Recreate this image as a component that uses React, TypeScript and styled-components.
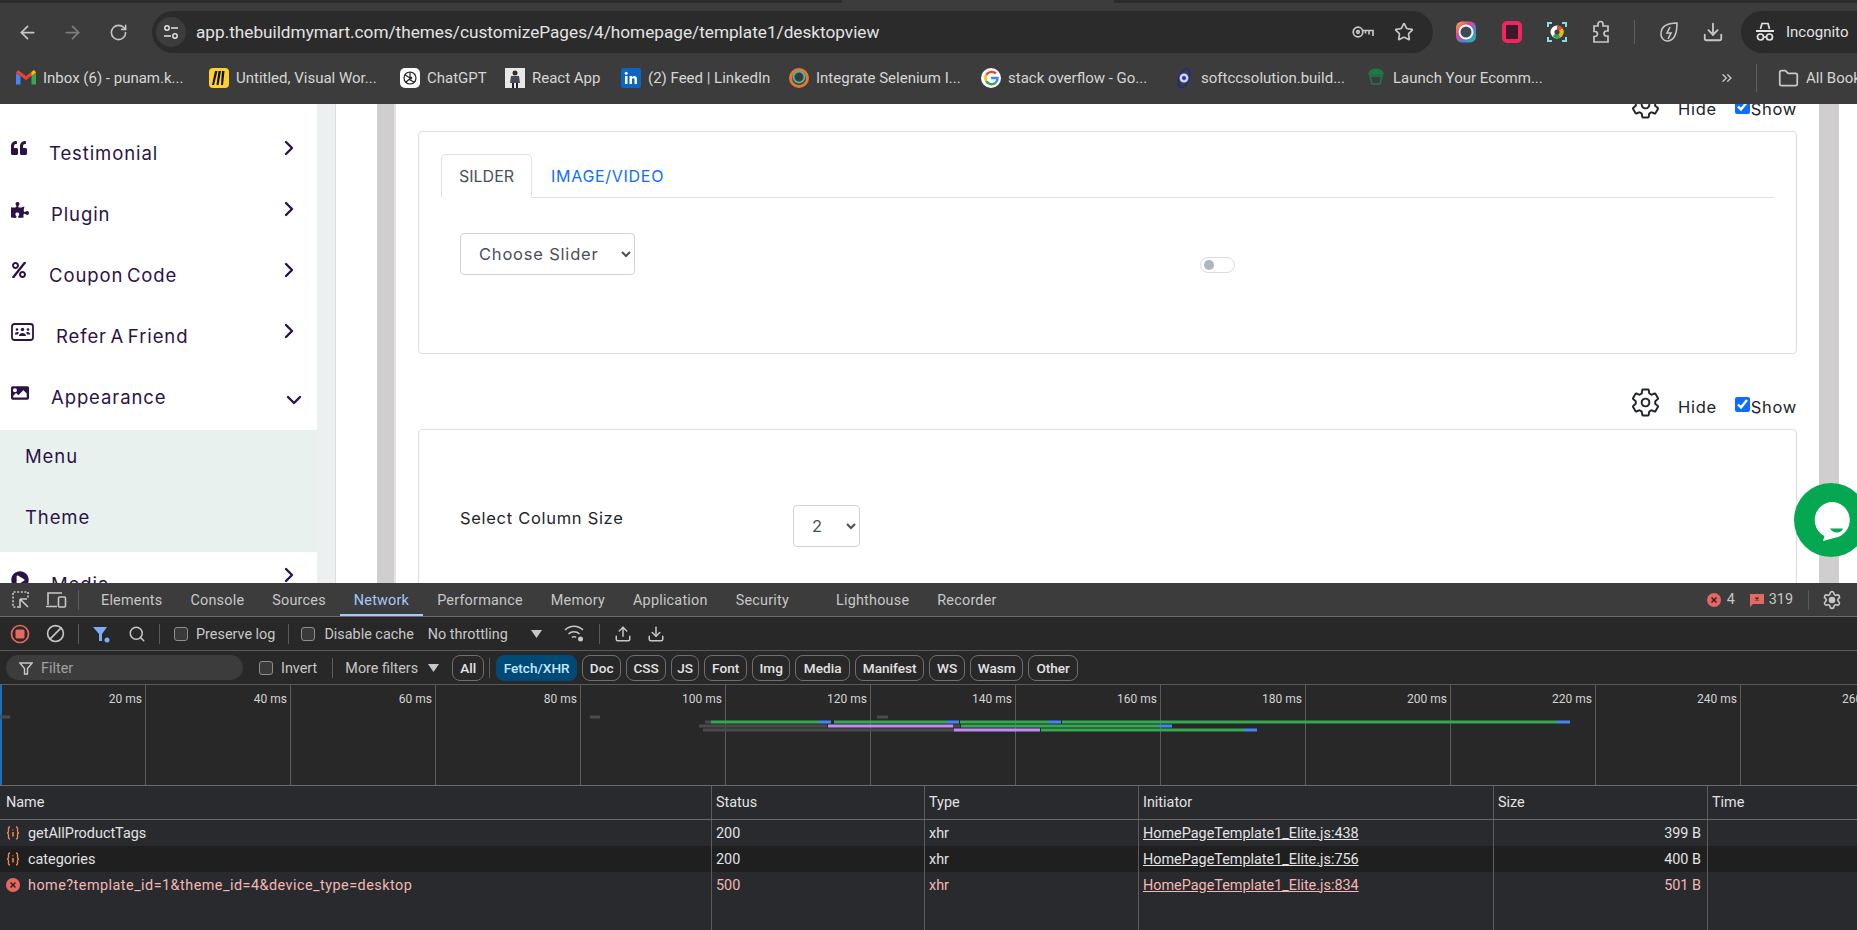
import React from "react";
import styled, { createGlobalStyle } from "styled-components";
import {
  ArrowLeft,
  ArrowRight,
  RotateCw,
  Star,
  Download,
  Upload,
  Folder,
  ChevronRight,
  ChevronDown,
  ChevronsRight,
  Settings,
  Search,
  Ban,
} from "lucide-react";
import { FaQuoteLeft, FaPuzzlePiece, FaPercent, FaImage, FaPlayCircle } from "react-icons/fa";
import { IoSettingsOutline } from "react-icons/io5";

const UI = `Roboto, "Liberation Sans", sans-serif`;
const PAGE = `Inter, "Liberation Sans", sans-serif`;

const GlobalStyle = createGlobalStyle`
  html, body { margin: 0; padding: 0; height: 100%; overflow: hidden; background: #282828; }
  * { box-sizing: border-box; }
`;

const Shell = styled.div`
  width: 1857px;
  height: 930px;
  display: flex;
  flex-direction: column;
  overflow: hidden;
`;

/* browser chrome */
const TopStrip = styled.div`
  height: 3px;
  display: flex;
  justify-content: space-between;
  background: #3c3c3c;
`;
const TopTab = styled.div<{ $w: number }>`
  width: ${(p) => p.$w}px;
  background: #2b2b2b;
`;
const Toolbar = styled.div`
  height: 50px;
  background: #3c3c3c;
  display: flex;
  align-items: flex-start;
  padding-top: 8px;
`;
const NavSlot = styled.div<{ $w: number; $ml?: number }>`
  width: ${(p) => p.$w}px;
  margin-left: ${(p) => p.$ml || 0}px;
  height: 42px;
  display: flex;
  align-items: center;
  justify-content: center;
  color: ${(p) => p.color || "#c7c7c7"};
  flex: none;
`;
const AddressBar = styled.div`
  width: 1281px;
  height: 42px;
  margin-left: 6px;
  padding-right: 9px;
  border-radius: 21px;
  background: #2b2b2b;
  display: flex;
  align-items: center;
  flex: none;
`;
const TuneButton = styled.div`
  width: 30px;
  height: 30px;
  margin-left: 4px;
  border-radius: 50%;
  background: #3c3c3c;
  display: flex;
  align-items: center;
  justify-content: center;
`;
const Url = styled.div`
  margin-left: 10px;
  flex: 1;
  font: 400 17.2px ${UI};
  color: #e3e3e3;
  white-space: nowrap;
`;
const UrlAction = styled.div`
  width: 41px;
  display: flex;
  justify-content: center;
  color: #c7c7c7;
`;
const ToolDivider = styled.div`
  width: 1px;
  height: 24px;
  background: #5f5f5f;
  margin: 9px 23px 0 22px;
`;
const IncognitoPill = styled.div`
  margin-left: 17px;
  width: 116px;
  height: 42px;
  border-radius: 21px 0 0 21px;
  background: #2b2b2b;
  display: flex;
  align-items: center;
  padding-left: 14px;
  gap: 11px;
  font: 400 15px ${UI};
  color: #e3e3e3;
`;
const BookmarkBar = styled.div`
  height: 51px;
  background: #3c3c3c;
  display: flex;
  align-items: center;
  padding: 0 0 1px 16px;
`;
const Bookmark = styled.div<{ $w: number }>`
  width: ${(p) => p.$w}px;
  flex: none;
  display: flex;
  align-items: center;
  gap: 7px;
  font: 400 15px ${UI};
  color: #d6d6d6;
  white-space: nowrap;
  overflow: hidden;

  svg {
    flex: none;
  }
`;
const BarDivider = styled.div`
  width: 1px;
  height: 28px;
  background: #5f5f5f;
  margin: 0 21px;
`;

/* page */
const Viewport = styled.div`
  height: 479px;
  display: flex;
  overflow: hidden;
  position: relative;
  background: #fff;
`;
const Sidebar = styled.nav`
  width: 317px;
  flex: none;
  padding-top: 21px;
  font: 400 18.5px ${PAGE};
  letter-spacing: 0.9px;
  word-spacing: -2.5px;
  color: #2b1348;
`;
const MenuItem = styled.div<{ $last?: boolean }>`
  height: 61px;
  padding: ${(p) => (p.$last ? "20px" : "16px")} 0 0 11px;
  position: relative;
  display: flex;
  align-items: flex-start;
  line-height: 24px;
`;
const MenuIcon = styled.span`
  display: flex;
  margin: -1px 22px 0 0;
`;
const Caret = styled.span<{ $open?: boolean }>`
  position: absolute;
  right: ${(p) => (p.$open ? 11 : 16)}px;
  top: ${(p) => (p.$open ? 19 : 11)}px;
  display: flex;

  svg {
    stroke-width: 2.4;
  }
`;
const SubMenu = styled.div`
  background: #e9f1ee;
`;
const SubItem = styled.div`
  height: 61px;
  padding: 0 0 9px 25px;
  display: flex;
  align-items: center;
`;
const Gutter = styled.div`
  width: 19px;
  flex: none;
  background: #ecf0f1;
  border-right: 1px solid #dcdfe0;
`;
const Panel = styled.main`
  flex: 1;
  display: flex;
  padding: 0 18px 0 41px;
  min-width: 0;
`;
const Frame = styled.div`
  flex: 1;
  min-width: 0;
  overflow: hidden;
  border-left: 17px solid #d0cece;
  border-right: 20px solid #d0cece;
  box-shadow: inset 2px 0 0 #e2e2e2;
  padding: 0 22px 0 24px;
  font: 400 16.5px ${PAGE};
  letter-spacing: 0.7px;
  color: #212529;
`;
const ScrolledContent = styled.div`
  margin-top: -23px;
`;
const SectionHead = styled.div`
  height: 50px;
  display: flex;
  justify-content: flex-end;
  align-items: flex-start;
  padding-top: 8px;
`;
const HeadLabel = styled.span<{ $gap: number }>`
  margin: 8px 0 0 ${(p) => p.$gap}px;
  line-height: 24px;
`;
const ShowBox = styled.input`
  width: 15px;
  height: 15px;
  margin: 10px 1px 0 18px;
  accent-color: #0d6efd;
`;
const Card = styled.section<{ $h: number }>`
  border: 1px solid #dcdfe2;
  border-radius: 4px;
  background: #fff;
  margin-bottom: 25px;
  height: ${(p) => p.$h}px;
`;
const TabStrip = styled.div`
  margin: 22px 22px 0;
  height: 44px;
  display: flex;
  border-bottom: 1px solid #dee2e6;
`;
const TabLink = styled.div<{ $active?: boolean }>`
  height: 44px;
  padding: 0 ${(p) => (p.$active ? 17 : 18)}px;
  display: flex;
  align-items: center;
  font: 400 16px ${PAGE};
  letter-spacing: ${(p) => (p.$active ? 0 : 0.7)}px;
  color: ${(p) => (p.$active ? "#495057" : "#0d6efd")};
  border: 1px solid ${(p) => (p.$active ? "#dee2e6" : "transparent")};
  border-bottom-color: ${(p) => (p.$active ? "#fff" : "transparent")};
  border-radius: 5px 5px 0 0;
`;
const SliderRow = styled.div`
  display: flex;
  align-items: flex-start;
  padding: 35px 0 0 41px;
`;
const FormSelect = styled.select<{ $w: number }>`
  width: ${(p) => p.$w}px;
  height: 42px;
  padding: 0 0 0 14px;
  background: #fff;
  border: 1px solid #ced4da;
  border-radius: 4px;
  font: 400 16.5px ${PAGE};
  letter-spacing: 0.8px;
  color: #495057;
`;
const Toggle = styled.span`
  margin: 24px 0 0 565px;
  width: 35px;
  height: 16px;
  border: 1px solid #dcdcdc;
  border-radius: 8px;
  padding: 2px 3px;
  display: block;
`;
const ToggleDot = styled.span`
  display: block;
  width: 10px;
  height: 10px;
  border-radius: 50%;
  background: #adb5bd;
`;
const ColumnRow = styled.div`
  display: flex;
  padding: 75px 0 0 41px;
`;
const ColumnLabel = styled.label`
  width: 333px;
  flex: none;
  line-height: 26px;
`;
const ChatBubble = styled.div`
  position: absolute;
  left: 1794px;
  top: 379px;
`;

/* devtools */
const Devtools = styled.div`
  flex: 1;
  display: flex;
  flex-direction: column;
  background: #282828;
  font: 400 14.4px ${UI};
  color: #c7c7c7;
  min-height: 0;
`;
const TabsRow = styled.div`
  height: 34px;
  background: #3c3c3c;
  border-bottom: 1px solid #6a6a6a;
  display: flex;
  align-items: stretch;
  flex: none;
`;
const IconSlot = styled.span<{ $w: number; $ml?: number }>`
  width: ${(p) => p.$w}px;
  margin-left: ${(p) => p.$ml || 0}px;
  flex: none;
  display: flex;
  align-items: center;
  justify-content: center;
`;
const DevDivider = styled.span<{ $ml: number; $mr?: number }>`
  width: 1px;
  height: 20px;
  align-self: center;
  flex: none;
  background: #5c5c5c;
  margin-left: ${(p) => p.$ml}px;
  margin-right: ${(p) => p.$mr || 0}px;
`;
const DevTab = styled.div<{ $active?: boolean; $ml?: number }>`
  padding: 2px 14px 0;
  margin-left: ${(p) => p.$ml ?? 0}px;
  display: flex;
  align-items: center;
  letter-spacing: 0.22px;
  color: ${(p) => (p.$active ? "#a8c7fa" : "#c7c7c7")};
  box-shadow: ${(p) => (p.$active ? "inset 0 -2px 0 #a8c7fa" : "none")};
`;
const StatusArea = styled.div`
  margin-left: auto;
  display: flex;
  align-items: center;
  padding-right: 15px;
`;
const Count = styled.span<{ $ml: number }>`
  margin-left: ${(p) => p.$ml}px;
`;
const DevGear = styled(Settings)`
  circle {
    fill: currentColor;
  }
`;
const ToolsRow = styled.div`
  height: 34px;
  border-bottom: 1px solid #5a5a5a;
  display: flex;
  align-items: center;
  flex: none;
`;
const ClearIcon = styled(Ban)`
  transform: scaleX(-1);
`;
const CheckBox = styled.span<{ $ml: number }>`
  width: 14px;
  height: 14px;
  margin-left: ${(p) => p.$ml}px;
  flex: none;
  border: 1.5px solid #8e8e8e;
  border-radius: 3px;
  background: #3a3a3a;
`;
const ToolText = styled.span<{ $ml: number }>`
  margin-left: ${(p) => p.$ml}px;
  padding-top: 2px;
  white-space: nowrap;
`;
const FilterBox = styled.div`
  width: 237px;
  height: 25px;
  margin-left: 6px;
  border-radius: 13px;
  background: #3c3c3c;
  display: flex;
  align-items: center;
  padding-left: 13px;
  gap: 8px;
  flex: none;
  color: #a0a0a0;
`;
const Chip = styled.span<{ $on?: boolean; $w: number; $ml?: number }>`
  width: ${(p) => p.$w}px;
  margin-left: ${(p) => p.$ml ?? 5}px;
  height: 26px;
  flex: none;
  display: flex;
  align-items: center;
  justify-content: center;
  border-radius: 8px;
  font-weight: 500;
  font-size: 13.6px;
  border: 1px solid ${(p) => (p.$on ? "#004a77" : "#6f6f6f")};
  background: ${(p) => (p.$on ? "#004a77" : "transparent")};
  color: ${(p) => (p.$on ? "#c2e7ff" : "#e3e3e3")};
`;
const Timeline = styled.div`
  height: 101px;
  flex: none;
  position: relative;
  display: flex;
  overflow: hidden;
  padding-left: 1px;
  border-bottom: 1px solid #6a6a6a;
  box-shadow: inset 2px 0 0 #1a6fb5;
`;
const Tick = styled.div`
  width: 145px;
  flex: none;
  border-right: 1px solid #5c5c5c;
  text-align: right;
  padding: 6px 3px 0 0;
  font-size: 12px;
  line-height: 16px;
  color: #d4d4d4;
  white-space: nowrap;
`;
const Waterfall = styled.svg`
  position: absolute;
  left: 0;
  top: 0;
`;
const Table = styled.div`
  flex: 1;
  display: flex;
  flex-direction: column;
  background: #292a2d;
  min-height: 0;
`;
const Columns = styled.div<{ $bg?: string; $h?: number; $fill?: boolean; $line?: boolean }>`
  display: grid;
  grid-template-columns: 711px 213px 214px 355px 214px 150px;
  height: ${(p) => (p.$h ? `${p.$h}px` : "auto")};
  flex: ${(p) => (p.$fill ? 1 : "none")};
  background: ${(p) => p.$bg || "transparent"};
  border-bottom: ${(p) => (p.$line ? "1px solid #6a6a6a" : "none")};
`;
const Cell = styled.div<{ $right?: boolean; $err?: boolean; $link?: boolean; $first?: boolean }>`
  border-left: ${(p) => (p.$first ? "none" : "1px solid #5c5c5c")};
  padding: 0 6px 0 ${(p) => (p.$first ? 6 : 4)}px;
  display: flex;
  align-items: center;
  justify-content: ${(p) => (p.$right ? "flex-end" : "flex-start")};
  gap: 8px;
  white-space: nowrap;
  color: ${(p) => (p.$err ? "#f2b8b5" : "#e3e3e3")};
  text-decoration: ${(p) => (p.$link ? "underline" : "none")};
`;
const RequestName = styled.span<{ $err?: boolean }>`
  letter-spacing: ${(p) => (p.$err ? 0.48 : 0)}px;
`;

/* small drawings */
const TuneIcon = () => (
  <svg width="16" height="16" viewBox="0 0 16 16" fill="none" stroke="#e3e3e3" strokeWidth="1.5">
    <circle cx="4" cy="4" r="2.2" />
    <path d="M8 4h7M1 12h7" />
    <circle cx="12" cy="12" r="2.2" />
  </svg>
);
const KeyIcon = () => (
  <svg width="22" height="14" viewBox="0 0 22 14" fill="none" stroke="#c7c7c7" strokeWidth="1.7">
    <circle cx="6" cy="7" r="4.800" />
    <circle cx="6" cy="7" r="1.300" />
    <path d="M10.500 5.500H21v5.500M17 5.500v4M13.500 5.500v3" />
  </svg>
);
const GmailIcon = () => (
  <svg width="20" height="16" viewBox="0 0 20 16">
    <path d="M0 3v11.500h4.500V6z" fill="#4285f4" />
    <path d="M15.500 6v8.500H20V3z" fill="#34a853" />
    <path d="M0 2.500 10 10l10-7.500L18 0l-8 6-8-6z" fill="#ea4335" />
    <path d="M15.500 6 20 2.500 18 0l-2.500 2z" fill="#fbbc04" />
  </svg>
);
const MiroIcon = () => (
  <svg width="20" height="20" viewBox="0 0 20 20">
    <rect width="20" height="20" rx="4" fill="#ffd02f" />
    <path d="M13 3h2.500L14 17h-2zM9.500 3H12L9.500 17h-2zM6 3h2.500L5 17H3z" fill="#111" />
  </svg>
);
const GptIcon = () => (
  <svg width="20" height="20" viewBox="0 0 20 20" fill="none" stroke="#222" strokeWidth="1.2">
    <rect width="20" height="20" rx="5" fill="#fff" stroke="none" />
    <circle cx="10" cy="10" r="6" />
    <path d="M10 4v8l4 2M5 7l7 4M6 14l6-5" />
  </svg>
);
const ReactAppIcon = () => (
  <svg width="20" height="20" viewBox="0 0 20 20">
    <rect width="20" height="20" fill="#e8e8e8" />
    <circle cx="10" cy="5" r="2.500" fill="#3a2a2a" />
    <path d="M6 8h8l1 7H5z" fill="#444a55" />
    <path d="M7 15h2v5H7zM11 15h2v5h-2z" fill="#222" />
  </svg>
);
const LinkedinIcon = () => (
  <svg width="20" height="20" viewBox="0 0 20 20">
    <rect width="20" height="20" rx="2" fill="#0a66c2" />
    <rect x="4" y="8" width="2.500" height="8" fill="#fff" />
    <circle cx="5.200" cy="5.200" r="1.500" fill="#fff" />
    <path d="M8.500 8H11v1.200c1-1.800 5-2 5 1.800v5h-2.500v-4.300c0-2-2.500-1.800-2.500 0V16H8.500z" fill="#fff" />
  </svg>
);
const SeleniumIcon = () => (
  <svg width="20" height="22" viewBox="0 0 20 22" fill="none">
    <circle cx="10" cy="11" r="8.500" stroke="#e8762d" strokeWidth="3" />
    <circle cx="10" cy="10" r="5.500" stroke="#4db6ac" strokeWidth="2" />
    <circle cx="10" cy="10" r="3" fill="#3a3a3a" />
  </svg>
);
const GoogleIcon = () => (
  <svg width="20" height="20" viewBox="0 0 20 20" fill="none">
    <circle cx="10" cy="10" r="10" fill="#fff" />
    <path d="M15 5.500a6.500 6.500 0 0 0-9.800 1.400" stroke="#ea4335" strokeWidth="2.400" />
    <path d="M5.200 6.900a6.500 6.500 0 0 0 0 6.200" stroke="#fbbc04" strokeWidth="2.400" />
    <path d="M5.200 13.100A6.500 6.500 0 0 0 14.500 15" stroke="#34a853" strokeWidth="2.400" />
    <path d="M14.500 15A6.500 6.500 0 0 0 16.500 10H10" stroke="#4285f4" strokeWidth="2.400" />
  </svg>
);
const SoftccIcon = () => (
  <svg width="20" height="24" viewBox="0 0 20 24" fill="none">
    <ellipse cx="10" cy="12" rx="5" ry="10" stroke="#2b2a78" strokeWidth="2" transform="rotate(20 10 12)" />
    <circle cx="10" cy="12" r="4.500" fill="#c6d4f5" />
    <circle cx="10" cy="12" r="2" fill="#30309a" />
  </svg>
);
const LaunchIcon = () => (
  <svg width="20" height="22" viewBox="0 0 20 22" fill="none" stroke="#1c7a4a" strokeWidth="1.500">
    <path d="M3 7c1-6 13-6 14 0z" fill="#1c7a4a" />
    <path d="M4 9h12l-2 8H6zM7 20h.1M13 20h.1" />
  </svg>
);
const ExtColorIcon = () => (
  <svg width="20" height="22" viewBox="0 0 20 22" fill="none">
    <defs>
      <linearGradient id="rainbow" x1="0" y1="0" x2="1" y2="1">
        <stop offset="0" stopColor="#f0c02c" />
        <stop offset="0.35" stopColor="#e8428e" />
        <stop offset="0.7" stopColor="#3a8cf0" />
        <stop offset="1" stopColor="#30c080" />
      </linearGradient>
    </defs>
    <rect x="0" y="0.500" width="20" height="21" rx="6" fill="url(#rainbow)" />
    <circle cx="10" cy="11" r="7.500" fill="#fff" />
    <circle cx="10" cy="11" r="5.500" fill="#3c4a55" />
  </svg>
);
const ExtPinkIcon = () => (
  <svg width="20" height="22" viewBox="0 0 20 22" fill="none">
    <rect x="2" y="2" width="16" height="18" rx="3" stroke="#f0275e" strokeWidth="4" fill="#3a1a28" />
  </svg>
);
const ExtLensIcon = () => (
  <svg width="20" height="20" viewBox="0 0 20 20" fill="none">
    <path d="M1 5V1h4M15 1h4v4M19 15v4h-4M5 19H1v-4" stroke="#7fe0e8" strokeWidth="2" />
    <circle cx="10" cy="10" r="6.500" fill="#fff" />
    <path d="M10 3.500a6.500 6.500 0 0 1 5.600 3.300L10 10z" fill="#e2483d" />
    <path d="M15.600 6.800a6.500 6.500 0 0 1-2 8.500L10 10z" fill="#f4b400" />
    <path d="M13.600 15.300a6.500 6.500 0 0 1-8-1L10 10z" fill="#2da44e" />
    <circle cx="10" cy="10" r="2.600" fill="#444" />
  </svg>
);
const ExtensionIcon = () => (
  <svg width="20" height="24" viewBox="0 0 20 24" fill="none" stroke="#c7c7c7" strokeWidth="1.700">
    <path d="M2 6h4V4a2.500 2.500 0 0 1 5 0v2h5v5h-1.500a2.500 2.500 0 0 0 0 5H16v6H2v-5.500h1a2.500 2.500 0 0 0 0-5H2z" />
  </svg>
);
const LeafIcon = () => (
  <svg width="22" height="24" viewBox="0 0 22 24" fill="none" stroke="#c7c7c7" strokeWidth="1.600">
    <path d="M19 3C8 3 3 7 3 14c0 3 2 7 6 7 7 0 10-7 10-18z" />
    <path d="M12 7l-3 6h4l-3 6" />
  </svg>
);
const IncognitoIcon = () => (
  <svg width="20" height="22" viewBox="0 0 20 22" fill="none" stroke="#e3e3e3" strokeWidth="1.700">
    <path d="M5.500 8 7 2.500h6L14.500 8" />
    <path d="M1 10h18" strokeWidth="2" />
    <circle cx="5.500" cy="16" r="3" />
    <circle cx="14.500" cy="16" r="3" />
    <path d="M8.500 16h3" />
  </svg>
);
const ReferIcon = () => (
  <svg width="23" height="18" viewBox="0 0 23 18" fill="#2b1348">
    <rect x="1" y="1" width="21" height="16" rx="2.500" fill="none" stroke="#2b1348" strokeWidth="1.800" />
    <circle cx="11.500" cy="6.500" r="1.700" />
    <circle cx="6" cy="6.500" r="1.300" />
    <circle cx="17" cy="6.500" r="1.300" />
    <path d="M8 13c0-4 7-4 7 0zM3.800 11.500c0-2.500 3.500-3 4.200-1.800-.8.700-1 1.200-1.100 1.800zM19.200 11.500c0-2.500-3.500-3-4.200-1.800.8.700 1 1.200 1.100 1.800z" />
  </svg>
);
const ChatIcon = () => (
  <svg width="74" height="74" viewBox="0 0 74 74">
    <circle cx="37" cy="37" r="37" fill="#05a850" />
    <path d="M38 19a18 18 0 0 1 3 35.700l-12 3.300 1.500-5A18 18 0 0 1 38 19z" fill="#fff" />
    <path d="M36 45.500h13c-1.500 5-10 5.500-13 0z" fill="#05a850" />
  </svg>
);
const InspectIcon = () => (
  <svg width="20" height="20" viewBox="0 0 20 20" fill="none" stroke="#c7c7c7" strokeWidth="1.600">
    <path d="M8 17H2V2h15v6" strokeDasharray="2 1.600" />
    <path d="M9 9v9M9 9h7M9.500 9.500 17 17" />
  </svg>
);
const DeviceIcon = () => (
  <svg width="22" height="18" viewBox="0 0 22 18" fill="none" stroke="#c7c7c7" strokeWidth="1.600">
    <path d="M3 14V2h14M1 15.500h11" />
    <rect x="13.500" y="6" width="7" height="10" rx="1" />
  </svg>
);
const RecordIcon = () => (
  <svg width="20" height="20" viewBox="0 0 20 20">
    <circle cx="10" cy="10" r="8.500" fill="none" stroke="#e46962" strokeWidth="1.700" />
    <rect x="5.500" y="5.500" width="9" height="9" rx="1.500" fill="#e46962" />
  </svg>
);
const FunnelIcon = () => (
  <svg width="20" height="20" viewBox="0 0 20 20" fill="#7cacf8">
    <path d="M1 3h14L10 10v7H7v-7z" />
    <circle cx="15" cy="16" r="2.500" />
  </svg>
);
const SmallFunnel = () => (
  <svg width="14" height="14" viewBox="0 0 14 14" fill="none" stroke="#c7c7c7" strokeWidth="1.400">
    <path d="M1 2h12L8.500 7.500V13h-3V7.500z" />
  </svg>
);
const Triangle = () => (
  <svg width="11" height="8" viewBox="0 0 11 8" fill="#c7c7c7">
    <path d="M0 0h11L5.500 8z" />
  </svg>
);
const WifiIcon = () => (
  <svg width="22" height="20" viewBox="0 0 22 20" fill="none" stroke="#c7c7c7" strokeWidth="1.600">
    <path d="M1 6c5-5 13-5 18 0M4.500 10c3-3 8-3 11 0M8 13.500c1-1 3-1 4 0" />
    <circle cx="16.500" cy="15" r="2.500" fill="#c7c7c7" stroke="none" />
  </svg>
);
const XhrIcon = () => (
  <svg width="14" height="14" viewBox="0 0 14 14" fill="none" stroke="#f28b54" strokeWidth="1.300">
    <path d="M4 1C2 1 2.500 3 2.500 5S1 7 1 7s1.500 0 1.500 2-.5 4 1.500 4M10 1c2 0 1.500 2 1.500 4S13 7 13 7s-1.500 0-1.500 2 .5 4-1.500 4" />
    <path d="M7 3.500v.8M7 6v4.500" strokeWidth="1.500" />
  </svg>
);
const ErrorIcon = () => (
  <svg width="14" height="14" viewBox="0 0 14 14" fill="none">
    <circle cx="7" cy="7" r="7" fill="#e46962" />
    <path d="M4.500 4.500l5 5M9.500 4.500l-5 5" stroke="#3a2020" strokeWidth="1.500" />
  </svg>
);
const IssueIcon = () => (
  <svg width="14" height="14" viewBox="0 0 14 14">
    <path d="M0 1h14v10H3l-3 3z" fill="#e46962" />
    <path d="M5.500 4.500l3 3M8.500 4.500l-3 3" stroke="#3a2020" strokeWidth="1.200" />
  </svg>
);

const bookmarks: { icon: React.ReactNode; label: string; w: number }[] = [
  { icon: <GmailIcon />, label: "Inbox (6) - punam.k...", w: 193 },
  { icon: <MiroIcon />, label: "Untitled, Visual Wor...", w: 191 },
  { icon: <GptIcon />, label: "ChatGPT", w: 105 },
  { icon: <ReactAppIcon />, label: "React App", w: 116 },
  { icon: <LinkedinIcon />, label: "(2) Feed | LinkedIn", w: 168 },
  { icon: <SeleniumIcon />, label: "Integrate Selenium I...", w: 192 },
  { icon: <GoogleIcon />, label: "stack overflow - Go...", w: 193 },
  { icon: <SoftccIcon />, label: "softccsolution.build...", w: 192 },
  { icon: <LaunchIcon />, label: "Launch Your Ecomm...", w: 353 },
];

const menu = [
  { icon: <FaQuoteLeft size={16} color="#2b1348" />, label: "Testimonial" },
  { icon: <FaPuzzlePiece size={18} color="#2b1348" />, label: "Plugin" },
  { icon: <FaPercent size={16} color="#2b1348" />, label: "Coupon Code" },
  { icon: <ReferIcon />, label: "Refer A Friend" },
];

const chips = [
  { label: "Doc", w: 39 },
  { label: "CSS", w: 40 },
  { label: "JS", w: 28 },
  { label: "Font", w: 43 },
  { label: "Img", w: 38 },
  { label: "Media", w: 55 },
  { label: "Manifest", w: 69 },
  { label: "WS", w: 36 },
  { label: "Wasm", w: 53 },
  { label: "Other", w: 50 },
];

const ticks = ["20 ms", "40 ms", "60 ms", "80 ms", "100 ms", "120 ms", "140 ms", "160 ms", "180 ms", "200 ms", "220 ms", "240 ms", "260 ms"];

// x start, x end, y, colour of each waterfall segment
const GREEN = "#34a853";
const BLUE = "#4285f4";
const PURPLE = "#c58af9";
const GREY = "#4a4a4a";
const bars: [number, number, number, string][] = [
  [705, 711, 722, GREY], [711, 819, 722, GREEN], [819, 831, 722, BLUE], [834, 947, 722, GREEN],
  [947, 959, 722, BLUE], [960, 1049, 722, GREEN], [1049, 1061, 722, BLUE], [1062, 1557, 722, GREEN], [1557, 1570, 722, BLUE],
  [699, 827, 726, GREY], [828, 953, 726, PURPLE], [953, 960, 726, GREY], [961, 1159, 726, GREEN], [1159, 1172, 726, BLUE],
  [703, 954, 730, GREY], [954, 1040, 730, PURPLE], [1041, 1244, 730, GREEN], [1244, 1257, 730, BLUE],
  [877, 888, 717, GREY], [590, 600, 717, GREY], [0, 10, 717, GREY],
];

const rows = [
  { name: "getAllProductTags", init: "HomePageTemplate1_Elite.js:438", size: "399 B", status: "200" },
  { name: "categories", init: "HomePageTemplate1_Elite.js:756", size: "400 B", status: "200", dark: true },
  { name: "home?template_id=1&theme_id=4&device_type=desktop", init: "HomePageTemplate1_Elite.js:834", size: "501 B", status: "500", err: true },
];

export default function App() {
  return (
    <Shell>
      <GlobalStyle />
      <TopStrip>
        <TopTab $w={842} />
        <TopTab $w={743} />
      </TopStrip>
      <Toolbar>
        <NavSlot $w={54}><ArrowLeft size={21} /></NavSlot>
        <NavSlot $w={36} color="#7d7d7d"><ArrowRight size={21} /></NavSlot>
        <NavSlot $w={56}><RotateCw size={19} /></NavSlot>
        <AddressBar>
          <TuneButton><TuneIcon /></TuneButton>
          <Url>app.thebuildmymart.com/themes/customizePages/4/homepage/template1/desktopview</Url>
          <UrlAction><KeyIcon /></UrlAction>
          <UrlAction><Star size={20} /></UrlAction>
        </AddressBar>
        <NavSlot $w={20} $ml={23}><ExtColorIcon /></NavSlot>
        <NavSlot $w={20} $ml={26}><ExtPinkIcon /></NavSlot>
        <NavSlot $w={20} $ml={25}><ExtLensIcon /></NavSlot>
        <NavSlot $w={20} $ml={25}><ExtensionIcon /></NavSlot>
        <ToolDivider />
        <NavSlot $w={22}><LeafIcon /></NavSlot>
        <NavSlot $w={22} $ml={22}><Download size={22} /></NavSlot>
        <IncognitoPill><IncognitoIcon />Incognito</IncognitoPill>
      </Toolbar>
      <BookmarkBar>
        {bookmarks.map((b) => (
          <Bookmark key={b.label} $w={b.w}>{b.icon}{b.label}</Bookmark>
        ))}
        <NavSlot $w={16}><ChevronsRight size={16} /></NavSlot>
        <BarDivider />
        <Bookmark $w={79}><Folder size={21} color="#c7c7c7" />All Bookmarks</Bookmark>
      </BookmarkBar>

      <Viewport>
        <Sidebar>
          {menu.map((m) => (
            <MenuItem key={m.label}>
              <MenuIcon>{m.icon}</MenuIcon>
              {m.label}
              <Caret><ChevronRight size={24} /></Caret>
            </MenuItem>
          ))}
          <MenuItem>
            <MenuIcon><FaImage size={18} color="#2b1348" /></MenuIcon>
            Appearance
            <Caret $open><ChevronDown size={24} /></Caret>
          </MenuItem>
          <SubMenu>
            <SubItem>Menu</SubItem>
            <SubItem>Theme</SubItem>
          </SubMenu>
          <MenuItem $last>
            <MenuIcon><FaPlayCircle size={18} color="#2b1348" /></MenuIcon>
            Media
            <Caret><ChevronRight size={24} /></Caret>
          </MenuItem>
        </Sidebar>
        <Gutter />
        <Panel>
          <Frame>
            <ScrolledContent>
              <SectionHead>
                <IoSettingsOutline size={31} color="#212529" />
                <HeadLabel $gap={17}>Hide</HeadLabel>
                <ShowBox type="checkbox" defaultChecked />
                <HeadLabel $gap={0}>Show</HeadLabel>
              </SectionHead>
              <Card $h={223}>
                <TabStrip>
                  <TabLink $active>SILDER</TabLink>
                  <TabLink>IMAGE/VIDEO</TabLink>
                </TabStrip>
                <SliderRow>
                  <FormSelect $w={175} defaultValue="slider">
                    <option value="slider">Choose Slider</option>
                  </FormSelect>
                  <Toggle><ToggleDot /></Toggle>
                </SliderRow>
              </Card>
              <SectionHead>
                <IoSettingsOutline size={31} color="#212529" />
                <HeadLabel $gap={17}>Hide</HeadLabel>
                <ShowBox type="checkbox" defaultChecked />
                <HeadLabel $gap={0}>Show</HeadLabel>
              </SectionHead>
              <Card $h={300}>
                <ColumnRow>
                  <ColumnLabel>Select Column Size</ColumnLabel>
                  <FormSelect $w={67} defaultValue="2">
                    <option value="2">2</option>
                  </FormSelect>
                </ColumnRow>
              </Card>
            </ScrolledContent>
          </Frame>
        </Panel>
        <ChatBubble><ChatIcon /></ChatBubble>
      </Viewport>

      <Devtools>
        <TabsRow>
          <IconSlot $w={20} $ml={11}><InspectIcon /></IconSlot>
          <IconSlot $w={22} $ml={14}><DeviceIcon /></IconSlot>
          <DevDivider $ml={11} $mr={8} />
          <DevTab>Elements</DevTab>
          <DevTab>Console</DevTab>
          <DevTab>Sources</DevTab>
          <DevTab $active>Network</DevTab>
          <DevTab>Performance</DevTab>
          <DevTab>Memory</DevTab>
          <DevTab>Application</DevTab>
          <DevTab>Security</DevTab>
          <DevTab $ml={19}>Lighthouse</DevTab>
          <DevTab>Recorder</DevTab>
          <StatusArea>
            <ErrorIcon />
            <Count $ml={6}>4</Count>
            <IconSlot $w={14} $ml={15}><IssueIcon /></IconSlot>
            <Count $ml={5}>319</Count>
            <DevDivider $ml={15} $mr={13} />
            <DevGear size={20} />
          </StatusArea>
        </TabsRow>
        <ToolsRow>
          <IconSlot $w={20} $ml={10}><RecordIcon /></IconSlot>
          <IconSlot $w={20} $ml={15}><ClearIcon size={19} /></IconSlot>
          <DevDivider $ml={13} />
          <IconSlot $w={20} $ml={13}><FunnelIcon /></IconSlot>
          <IconSlot $w={20} $ml={15}><Search size={18} /></IconSlot>
          <DevDivider $ml={12} />
          <CheckBox $ml={14} />
          <ToolText $ml={8}>Preserve log</ToolText>
          <DevDivider $ml={13} />
          <CheckBox $ml={12} />
          <ToolText $ml={9}>Disable cache</ToolText>
          <ToolText $ml={14}>No throttling</ToolText>
          <IconSlot $w={11} $ml={23}><Triangle /></IconSlot>
          <IconSlot $w={22} $ml={22}><WifiIcon /></IconSlot>
          <DevDivider $ml={13} />
          <IconSlot $w={18} $ml={14}><Upload size={18} /></IconSlot>
          <IconSlot $w={18} $ml={15}><Download size={18} /></IconSlot>
        </ToolsRow>
        <ToolsRow>
          <FilterBox><SmallFunnel /><ToolText $ml={0}>Filter</ToolText></FilterBox>
          <CheckBox $ml={16} />
          <ToolText $ml={8}>Invert</ToolText>
          <DevDivider $ml={15} />
          <ToolText $ml={12}>More filters</ToolText>
          <IconSlot $w={11} $ml={10}><Triangle /></IconSlot>
          <Chip $w={32} $ml={13}>All</Chip>
          <DevDivider $ml={5} />
          <Chip $on $w={81} $ml={6}>Fetch/XHR</Chip>
          {chips.map((c) => (
            <Chip key={c.label} $w={c.w}>{c.label}</Chip>
          ))}
        </ToolsRow>
        <Timeline>
          {ticks.map((t) => <Tick key={t}>{t}</Tick>)}
          <Waterfall width="1857" height="100" viewBox="0 685 1857 100">
            {bars.map(([a, b, y, c]) => (
              <rect key={`${a}-${y}`} x={a} y={y - 1.5} width={b - a} height="3" fill={c} />
            ))}
          </Waterfall>
        </Timeline>
        <Table>
          <Columns $h={34} $line>
            <Cell $first>Name</Cell>
            <Cell>Status</Cell>
            <Cell>Type</Cell>
            <Cell>Initiator</Cell>
            <Cell>Size</Cell>
            <Cell>Time</Cell>
          </Columns>
          {rows.map((r) => (
            <Columns key={r.name} $h={26} $bg={r.dark ? "#1f1f1f" : undefined}>
              <Cell $first $err={r.err}>
                {r.err ? <ErrorIcon /> : <XhrIcon />}
                <RequestName $err={r.err}>{r.name}</RequestName>
              </Cell>
              <Cell $err={r.err}>{r.status}</Cell>
              <Cell $err={r.err}>xhr</Cell>
              <Cell $err={r.err} $link>{r.init}</Cell>
              <Cell $err={r.err} $right>{r.size}</Cell>
              <Cell />
            </Columns>
          ))}
          <Columns $fill>
            <Cell $first />
            <Cell />
            <Cell />
            <Cell />
            <Cell />
            <Cell />
          </Columns>
        </Table>
      </Devtools>
    </Shell>
  );
}
